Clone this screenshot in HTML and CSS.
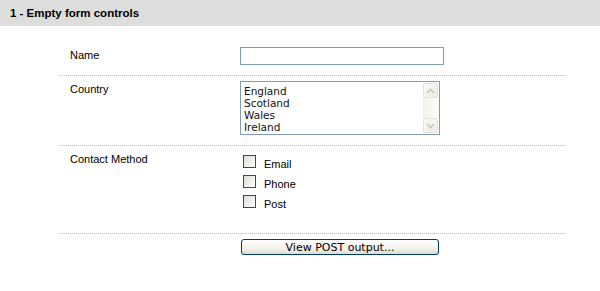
FILE: index.html
```html
<!DOCTYPE html>
<html>
<head>
<meta charset="utf-8">
<title>Empty form controls</title>
<link rel="stylesheet" href="styles.css">
</head>
<body>
<h2 class="section-title">1 - Empty form controls</h2>
<form class="form">
  <div class="row">
    <label class="label" for="name">Name</label>
    <div class="control"><input class="text-input" id="name" type="text"></div>
  </div>
  <div class="row">
    <div class="label">Country</div>
    <div class="control">
      <div class="listbox" role="listbox">
        <ul class="options">
          <li>England</li>
          <li>Scotland</li>
          <li>Wales</li>
          <li>Ireland</li>
        </ul>
        <div class="scrollbar">
          <span class="sb-btn"><svg width="9" height="6" viewBox="0 0 9 6"><path d="M1 5 L4.5 1.5 L8 5" fill="none" stroke="#c9c7bc" stroke-width="1.6"/></svg></span>
          <span class="sb-btn"><svg width="9" height="6" viewBox="0 0 9 6"><path d="M1 1 L4.5 4.5 L8 1" fill="none" stroke="#c9c7bc" stroke-width="1.6"/></svg></span>
        </div>
      </div>
    </div>
  </div>
  <div class="row">
    <div class="label">Contact Method</div>
    <div class="control">
      <ul class="checks">
        <li class="check"><input type="checkbox" class="box" id="c1"><label for="c1">Email</label></li>
        <li class="check"><input type="checkbox" class="box" id="c2"><label for="c2">Phone</label></li>
        <li class="check"><input type="checkbox" class="box" id="c3"><label for="c3">Post</label></li>
      </ul>
    </div>
  </div>
  <div class="row row-last">
    <div class="label"></div>
    <div class="control"><button type="button" class="btn">View POST output...</button></div>
  </div>
</form>
</body>
</html>
```
FILE: styles.css
```css
html, body {
  margin: 0;
  padding: 0;
  background: #fff;
}
body {
  font-family: "Liberation Sans", Arial, sans-serif;
  font-size: 11px;
  color: #000;
  width: 600px;
}
.section-title {
  margin: 0;
  height: 26px;
  line-height: 27px;
  background: #dddddd;
  font-size: 11.5px;
  font-weight: bold;
  padding-left: 10px;
}
.form {
  margin: 16px 0 0 60px;
  width: 505px;
}
.row {
  display: flex;
  padding: 5px 0 10px;
  border-bottom: 1px dotted #bdbdbd;
}
.row-last {
  border-bottom: none;
}
.label {
  width: 170px;
  padding-left: 10px;
  padding-top: 2px;
  line-height: 12px;
  flex: none;
}
.row:first-child .label {
  padding-top: 2px;
}
.control {
  flex: 1;
}
.text-input {
  display: block;
  box-sizing: border-box;
  width: 204px;
  height: 18px;
  margin: 0;
  border: 1px solid #7f9db9;
  padding: 0 3px;
}
.listbox {
  box-sizing: border-box;
  width: 200px;
  height: 54px;
  border: 1px solid #7f9db9;
  display: flex;
  justify-content: space-between;
}
.options {
  list-style: none;
  margin: 0;
  padding: 3px 3px 0;
  font-family: "DejaVu Sans", Verdana, sans-serif;
  font-size: 10.5px;
  line-height: 12px;
  color: #111;
}
.scrollbar {
  width: 15px;
  margin: 1px;
  background: linear-gradient(to right, #f3f1e7, #fdfdfa);
  display: flex;
  flex-direction: column;
  justify-content: space-between;
}
.sb-btn {
  box-sizing: border-box;
  height: 15px;
  border: 1px solid #e4e2d8;
  border-radius: 2px;
  background: linear-gradient(135deg, #fbfbf7, #ecebe3);
  display: flex;
  align-items: center;
  justify-content: center;
}
.checks {
  list-style: none;
  margin: 0 0 12px;
  padding: 0;
}
.check {
  height: 20px;
  display: flex;
  align-items: center;
}
.check label {
  margin-left: 8px;
  padding-top: 5px;
}
.box {
  appearance: none;
  -webkit-appearance: none;
  box-sizing: border-box;
  width: 13px;
  height: 13px;
  margin: 0 0 0 3px;
  border: 1px solid #1c5180;
  background: linear-gradient(135deg, #dcdcd7, #ffffff);
}
.btn {
  box-sizing: border-box;
  width: 198px;
  height: 16px;
  margin: 0 0 0 1px;
  padding: 0;
  border: 1px solid #003c74;
  border-radius: 3px;
  background: linear-gradient(#ffffff, #f3f2ec 60%, #dedbcc);
  font-family: "DejaVu Sans", Verdana, sans-serif;
  font-size: 11px;
  line-height: 13px;
  color: #000;
}
```
